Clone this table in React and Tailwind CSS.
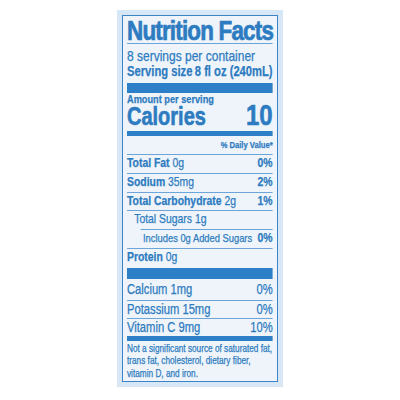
import React from "react";

const F = { fontFamily: '"Liberation Sans", Arial, sans-serif' };

function Line({ indent = "" }) {
  return <div className={`h-px bg-[#6ea5d8] ${indent}`} />;
}

function Row({ left, right, cls = "" }) {
  return (
    <div className={`flex justify-between h-[17.8px] leading-[16px] text-[13px] whitespace-nowrap ${cls}`}>
      <span>{left}</span>
      <span className="font-bold">{right}</span>
    </div>
  );
}

export default function App() {
  return (
    <div className="w-[400px] h-[400px] bg-white pt-[10px]" style={F}>
      <div className="mx-auto w-[166px] h-[377px] bg-[#d7e7f5] p-[5px]">
        <div className="h-full border-[1.5px] border-[#3a83c6] bg-[#eef4fa] px-[3.5px] text-[#2d7bc0] overflow-hidden">
          <div className="w-[182px] origin-top-left scale-x-[0.8] flex flex-col [-webkit-text-stroke:0.25px_#2d7bc0]">
            <div className="h-[27px] leading-[29.6px] text-[28px] font-bold tracking-[-1px] whitespace-nowrap [-webkit-text-stroke:0.7px_#2d7bc0]">Nutrition Facts</div>
            <Line />
            <div className="mt-[3.6px] h-[16.8px] leading-[16.8px] text-[15px] whitespace-nowrap">8 servings per container</div>
            <div className="h-[15.6px] leading-[15.6px] text-[14px] font-bold flex justify-between whitespace-nowrap">
              <span>Serving size</span><span>8 fl oz (240mL)</span>
            </div>
            <div className="h-[10px] mt-[3.5px] bg-[#2d80c8]" />
            <div className="h-[12px] leading-[12.4px] text-[11.5px] font-bold whitespace-nowrap">Amount per serving</div>
            <div className="h-[22px] flex justify-between items-baseline font-bold [-webkit-text-stroke:0.6px_#2d7bc0]">
              <span className="text-[25px] leading-[22px]">Calories</span>
              <span className="text-[30px] leading-[18.5px]">10</span>
            </div>
            <div className="h-[5px] mt-[4px] bg-[#2d80c8]" />
            <div className="h-[17.5px] leading-[18px] text-[9.5px] font-bold text-right whitespace-nowrap">% Daily Value*</div>
            <Line />
            <Row left={<><b>Total Fat</b> 0g</>} right="0%" />
            <Line />
            <Row left={<><b>Sodium</b> 35mg</>} right="2%" />
            <Line />
            <Row left={<><b>Total Carbohydrate</b> 2g</>} right="1%" />
            <Line />
            <Row left="Total Sugars 1g" right="" cls="pl-[9px]" />
            <Line indent="ml-[17px]" />
            <div className="flex justify-between h-[17.8px] leading-[16px] whitespace-nowrap pl-[20px]">
              <span className="text-[11.7px]">Includes 0g Added Sugars</span>
              <span className="font-bold text-[13px]">0%</span>
            </div>
            <Line />
            <Row left={<><b>Protein</b> 0g</>} right="" />
            <div className="h-[11px] mt-[1px] bg-[#2d80c8]" />
            <div className="h-[21.7px] leading-[21.7px] text-[14px] flex justify-between whitespace-nowrap"><span>Calcium 1mg</span><span>0%</span></div>
            <Line />
            <div className="h-[17px] leading-[16.3px] text-[14px] flex justify-between whitespace-nowrap"><span>Potassium 15mg</span><span>0%</span></div>
            <Line />
            <div className="h-[17px] leading-[16.3px] text-[14px] flex justify-between whitespace-nowrap"><span>Vitamin C 9mg</span><span>10%</span></div>
            <div className="h-[5px] bg-[#2d80c8]" />
            <div className="mt-[1.2px] text-[10.3px] leading-[12.5px] whitespace-nowrap">
              Not a significant source of saturated fat,<br />
              trans fat, cholesterol, dietary fiber,<br />
              vitamin D, and iron.
            </div>
          </div>
        </div>
      </div>
    </div>
  );
}
